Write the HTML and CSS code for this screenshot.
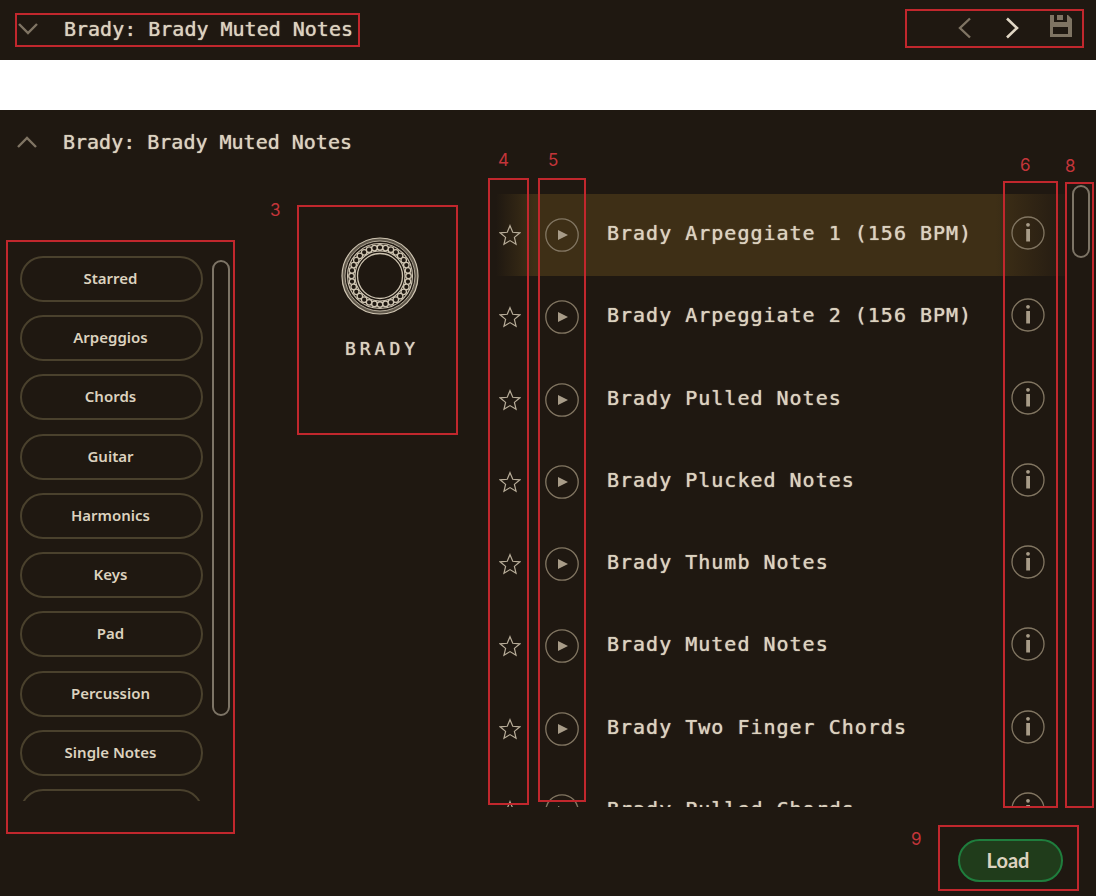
FILE: index.html
```html
<!DOCTYPE html>
<html lang="en">
<head>
<meta charset="utf-8">
<title>Brady: Brady Muted Notes</title>
<link rel="stylesheet" href="styles.css">
</head>
<body>
<svg class="defs" aria-hidden="true">
  <symbol id="star" viewBox="0 0 24 24"><path d="M12 1.800l3 7.200 7.800.6-6 5 1.800 7.600-6.600-4.100-6.600 4.100 1.800-7.600-6-5 7.800-.6z" fill="none" stroke="#b8ad99" stroke-width="1.300"/></symbol>
  <symbol id="play" viewBox="0 0 34 34"><circle cx="17" cy="17" r="16.200" fill="none" stroke="#827662" stroke-width="1.300"/><path d="M13 12l10 5-10 5z" fill="#a89c88"/></symbol>
  <symbol id="info" viewBox="0 0 34 34"><circle cx="17" cy="17" r="16" fill="none" stroke="#827662" stroke-width="1.300"/><circle cx="17" cy="8.800" r="1.900" fill="#a89c88"/><path d="M15.200 13h3.800v12.500h-3.800z" fill="#a89c88"/></symbol>
</svg>

<header class="bar">
  <div class="preset marked">
    <button class="icon-button" aria-label="Expand browser"><svg width="22" height="14" viewBox="0 0 22 14"><path d="M2 2l9 9 9-9" fill="none" stroke="#7f7463" stroke-width="2.400"/></svg></button>
    <span class="title">Brady: Brady Muted Notes</span>
  </div>
  <div class="tools marked">
    <button class="icon-button" aria-label="Previous preset"><svg width="14" height="22" viewBox="0 0 14 22"><path d="M12 1.500L2 11l10 9.500" fill="none" stroke="#7f7463" stroke-width="2.400"/></svg></button>
    <button class="icon-button" aria-label="Next preset"><svg width="14" height="22" viewBox="0 0 14 22"><path d="M2 1.500L12 11 2 20.500" fill="none" stroke="#e0d6c4" stroke-width="2.600"/></svg></button>
    <button class="icon-button save" aria-label="Save preset"><svg width="22" height="22" viewBox="0 0 22 22"><path d="M0 0h4v7h13V0h1l4 4v18H0zM7 0h6v5H7zM3 12v7h15v-7z" fill="#7f7463" fill-rule="evenodd"/></svg></button>
  </div>
</header>

<main class="browser">
  <div class="heading">
    <button class="icon-button" aria-label="Collapse browser"><svg width="22" height="14" viewBox="0 0 22 14"><path d="M2 12l9-9 9 9" fill="none" stroke="#7f7463" stroke-width="2.400"/></svg></button>
    <h1 class="title">Brady: Brady Muted Notes</h1>
  </div>
  <div class="body">
    <nav class="filters marked" aria-label="Categories">
      <div class="filter-view">
        <div class="filter-list">
          <button class="filter">Starred</button>
          <button class="filter">Arpeggios</button>
          <button class="filter">Chords</button>
          <button class="filter">Guitar</button>
          <button class="filter">Harmonics</button>
          <button class="filter">Keys</button>
          <button class="filter">Pad</button>
          <button class="filter">Percussion</button>
          <button class="filter">Single Notes</button>
          <button class="filter" aria-label="More"></button>
        </div>
      </div>
      <div class="thumb filter-thumb"></div>
    </nav>

    <div class="content">
      <div class="columns">
        <section class="artist marked">
          <span class="number number-left">3</span>
          <svg width="78" height="78" viewBox="-39 -39 78 78" fill="none" stroke="#cfc5b2">
            <circle r="36.500" stroke="#5f574a" stroke-width="3"/>
            <circle r="38" stroke-width="1.200"/>
            <circle r="35" stroke-width=".8"/>
            <circle r="32.500" stroke-width="1.100"/>
            <circle r="28.500" stroke-width="6.800" stroke-linecap="round" pathLength="32" stroke-dasharray="0 1"/>
            <circle r="28.500" stroke="#1f1811" stroke-width="4.200" stroke-linecap="round" pathLength="32" stroke-dasharray="0 1"/>
            <circle r="25" stroke-width="1.100"/>
            <circle r="22.500" stroke-width="1.300"/>
          </svg>
          <span class="artist-name">BRADY</span>
        </section>

        <section class="presets">
          <div class="preset-view">
            <ul class="preset-list">
              <li class="row selected"><button class="icon-button star" aria-label="Star"><svg><use href="#star"/></svg></button><button class="icon-button round" aria-label="Play"><svg><use href="#play"/></svg></button><span class="name">Brady Arpeggiate 1 (156 BPM)</span><button class="icon-button round info" aria-label="Info"><svg><use href="#info"/></svg></button></li>
              <li class="row"><button class="icon-button star" aria-label="Star"><svg><use href="#star"/></svg></button><button class="icon-button round" aria-label="Play"><svg><use href="#play"/></svg></button><span class="name">Brady Arpeggiate 2 (156 BPM)</span><button class="icon-button round info" aria-label="Info"><svg><use href="#info"/></svg></button></li>
              <li class="row"><button class="icon-button star" aria-label="Star"><svg><use href="#star"/></svg></button><button class="icon-button round" aria-label="Play"><svg><use href="#play"/></svg></button><span class="name">Brady Pulled Notes</span><button class="icon-button round info" aria-label="Info"><svg><use href="#info"/></svg></button></li>
              <li class="row"><button class="icon-button star" aria-label="Star"><svg><use href="#star"/></svg></button><button class="icon-button round" aria-label="Play"><svg><use href="#play"/></svg></button><span class="name">Brady Plucked Notes</span><button class="icon-button round info" aria-label="Info"><svg><use href="#info"/></svg></button></li>
              <li class="row"><button class="icon-button star" aria-label="Star"><svg><use href="#star"/></svg></button><button class="icon-button round" aria-label="Play"><svg><use href="#play"/></svg></button><span class="name">Brady Thumb Notes</span><button class="icon-button round info" aria-label="Info"><svg><use href="#info"/></svg></button></li>
              <li class="row"><button class="icon-button star" aria-label="Star"><svg><use href="#star"/></svg></button><button class="icon-button round" aria-label="Play"><svg><use href="#play"/></svg></button><span class="name">Brady Muted Notes</span><button class="icon-button round info" aria-label="Info"><svg><use href="#info"/></svg></button></li>
              <li class="row"><button class="icon-button star" aria-label="Star"><svg><use href="#star"/></svg></button><button class="icon-button round" aria-label="Play"><svg><use href="#play"/></svg></button><span class="name">Brady Two Finger Chords</span><button class="icon-button round info" aria-label="Info"><svg><use href="#info"/></svg></button></li>
              <li class="row"><button class="icon-button star" aria-label="Star"><svg><use href="#star"/></svg></button><button class="icon-button round" aria-label="Play"><svg><use href="#play"/></svg></button><span class="name">Brady Pulled Chords</span><button class="icon-button round info" aria-label="Info"><svg><use href="#info"/></svg></button></li>
            </ul>
          </div>
          <div class="callout callout-star"><span class="number number-top">4</span></div>
          <div class="callout callout-play"><span class="number number-top">5</span></div>
          <div class="callout callout-info"><span class="number number-top">6</span></div>
        </section>

        <div class="scrollbar marked"><span class="number number-scroll">8</span><div class="thumb preset-thumb"></div></div>
      </div>

      <div class="footer">
        <div class="load-area marked">
          <span class="number number-left">9</span>
          <button class="load">Load</button>
        </div>
      </div>
    </div>
  </div>
</main>
</body>
</html>
```
FILE: styles.css
```css
* { box-sizing: border-box; }

body {
  margin: 0 1px 0 0;
  background: #fff;
  color: #dcd2bf;
  font-family: "DejaVu Sans Mono", monospace;
}

.defs { display: none; }

button {
  margin: 0;
  color: inherit;
  font-family: inherit;
  cursor: pointer;
}

.icon-button {
  display: flex;
  flex: none;
  padding: 0;
  border: 0;
  background: none;
}

.marked {
  position: relative;
  border: 2px solid #c1272d;
}

.title,
.name,
.artist-name {
  text-shadow: 0 0 1px #dcd2bf;
}

.title {
  margin: 0;
  font-size: 20px;
  line-height: 24px;
  font-weight: 400;
  white-space: nowrap;
}

/* Collapsed bar */
.bar {
  display: flex;
  justify-content: space-between;
  align-items: flex-start;
  height: 60px;
  padding: 9px 12px 0 15px;
  background: #1f1811;
}

.preset {
  display: flex;
  align-items: center;
  gap: 25px;
  height: 34px;
  margin-top: 4px;
  padding: 0 5px 2px 0;
}

.tools {
  display: flex;
  align-items: center;
  justify-content: flex-end;
  gap: 33px;
  width: 179px;
  height: 39px;
  padding: 0 10px 2px 0;
}

.save { margin: 0 0 4px -2px; }

/* Expanded browser */
.browser {
  margin-top: 50px;
  background: #1f1811;
}

.heading {
  display: flex;
  align-items: center;
  gap: 25px;
  height: 64px;
  padding-left: 16px;
}

.body {
  display: flex;
  align-items: flex-start;
  padding-left: 6px;
}

.filters {
  display: flex;
  flex: none;
  gap: 9px;
  width: 229px;
  height: 594px;
  margin-top: 66px;
  padding: 14px 0 0 12px;
}

.filter-view {
  width: 183px;
  height: 545px;
  overflow: hidden;
}

.filter-list {
  display: flex;
  flex-direction: column;
  justify-content: space-between;
  height: 579px;
}

.filter {
  flex: none;
  height: 46px;
  padding: 0 2px 2px 0;
  border: 2px solid #4a412d;
  border-radius: 23px;
  background: none;
  font-family: "Noto Sans", sans-serif;
  font-size: 15px;
  font-weight: 600;
}

.thumb {
  flex: none;
  width: 18px;
  border: 2px solid #7d7466;
  border-radius: 9px;
}

.filter-thumb {
  height: 456px;
  margin-top: 4px;
}

.content {
  flex: 1;
  min-width: 0;
  padding: 0 2px 5px 62px;
}

.columns {
  display: flex;
  align-items: flex-start;
}

.artist {
  display: flex;
  flex: none;
  flex-direction: column;
  align-items: center;
  gap: 22px;
  width: 161px;
  height: 230px;
  margin: 31px 30px 0 0;
  padding: 30px 0 0 5px;
}

.artist-name {
  padding-left: 4px;
  font-size: 18px;
  line-height: 24px;
  letter-spacing: 4px;
}

.presets {
  position: relative;
  flex: 1;
  min-width: 0;
  margin-top: 20px;
}

.preset-view {
  height: 613px;
  overflow: hidden;
}

.preset-list {
  display: flex;
  flex-direction: column;
  height: 658px;
  margin: 0;
  padding: 0;
  list-style: none;
}

.row {
  display: flex;
  flex: 1;
  align-items: center;
  padding: 0 20px 0 11px;
}

.selected {
  background: linear-gradient(90deg, #1f1811 8px, #3e2f16 46px, #3e2f16 calc(100% - 70px), #241b12);
}

.star svg { width: 22px; height: 22px; }

.star { margin-right: 24px; }

.round svg { width: 34px; height: 34px; }

.info { padding-bottom: 4px; }

.name {
  flex: 1;
  min-width: 0;
  padding: 0 0 4px 28px;
  font-size: 20px;
  line-height: 24px;
  letter-spacing: 1px;
  white-space: nowrap;
}

/* Numbered callouts drawn over the preset columns */
.callout {
  position: absolute;
  border: 2px solid #c1272d;
  pointer-events: none;
}

.callout-star { top: -16px; bottom: 2px; left: 0; width: 41px; }
.callout-play { top: -16px; bottom: 5px; left: 50px; width: 48px; }
.callout-info { top: -13px; bottom: -1px; right: 7px; width: 55px; }

.number {
  position: absolute;
  color: #c4353a;
  font-family: Inter, sans-serif;
  font-size: 17px;
  line-height: 20px;
}

.number-top { top: -30px; left: 8px; }
.callout-info .number-top { top: -28px; left: 15px; }
.number-left { top: -7px; left: -29px; }
.number-scroll { top: -28px; left: -2px; }

.scrollbar {
  flex: none;
  width: 29px;
  height: 626px;
  margin-top: 8px;
  padding: 1px 0 0 5px;
}

.preset-thumb { height: 73px; }

.footer {
  display: flex;
  justify-content: flex-end;
  padding: 17px 15px 0 0;
}

.load-area { padding: 12px 14px 7px 18px; }

.load-area .number-left { top: 2px; }

.load {
  display: block;
  width: 105px;
  height: 43px;
  padding: 0 5px 2px 0;
  border: 2px solid #1f7d3d;
  border-radius: 22px;
  background: #203c1b;
  font-family: Lato, sans-serif;
  font-size: 20px;
  font-weight: 700;
}
```
